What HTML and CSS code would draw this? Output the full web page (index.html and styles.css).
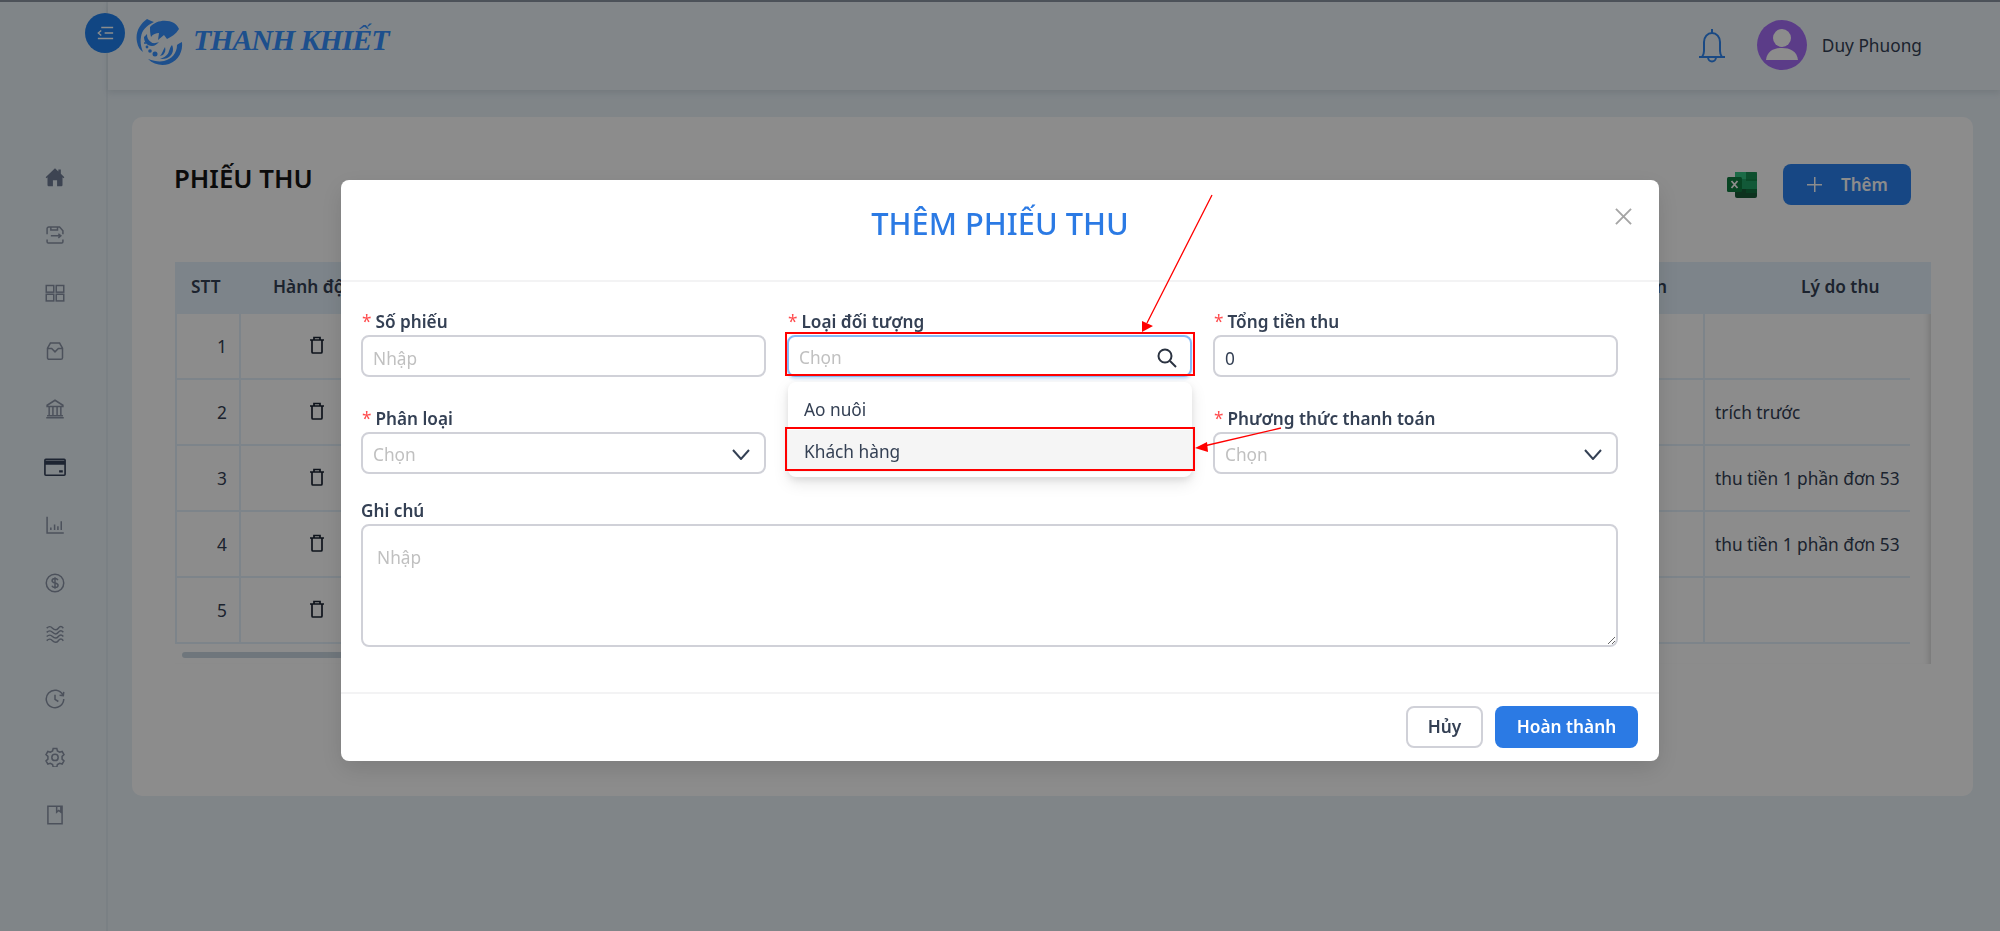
FILE: index.html
```html
<!DOCTYPE html>
<html lang="vi">
<head>
<meta charset="utf-8">
<title>Phiếu thu</title>
<link rel="stylesheet" href="styles.css">
</head>
<body>
<div class="app">
  <aside class="sidebar">
    <div class="nav-item"><svg class="nav-icon" viewBox="0 0 24 24"><path class="solid" d="M12 1.500 0.800 12.200l1 1.200L3 12.300V22a1 1 0 0 0 1 1h5.500v-7h5v7H20a1 1 0 0 0 1-1v-9.700l1.200 1.100 1-1.200L19 8.200V3h-3v2.300z"/></svg></div>
    <div class="nav-item"><svg class="nav-icon" viewBox="0 0 24 24"><path d="M2.500 11V4.500a2 2 0 0 1 2-2h13l4 4.500V11M7 2.800V6h8V2.800M7 13h12M16 10.500l3 2.500-3 2.500M2.500 17.500V20a1.500 1.500 0 0 0 1.500 1.500h16a1.500 1.500 0 0 0 1.500-1.500v-2.500"/></svg></div>
    <div class="nav-item"><svg class="nav-icon" viewBox="0 0 24 24"><rect x="1.500" y="3" width="9" height="8"/><rect x="13.500" y="3" width="9" height="8"/><rect x="1.500" y="13.500" width="9" height="8"/><rect x="13.500" y="13.500" width="9" height="8"/></svg></div>
    <div class="nav-item"><svg class="nav-icon" viewBox="0 0 24 24"><path d="M6.500 2.500h11l3.500 6V20a2 2 0 0 1-2 2H5a2 2 0 0 1-2-2V8.500zM3 9h5l4 4 4-4h5"/></svg></div>
    <div class="nav-item"><svg class="nav-icon" viewBox="0 0 24 24"><path d="M12 1.500 2.500 7.500V9h19V7.500zM5 9.500v10M9.500 9.500v10M14.500 9.500v10M19 9.500v10M2.500 20h19M1.500 22.500h21"/></svg></div>
    <div class="nav-item"><svg class="nav-icon nav-icon-strong" viewBox="0 0 24 24"><rect x="1" y="3.500" width="22" height="17.500" rx="1"/><path class="solid" d="M1 5h22v4.500H1zM16.500 15.500h4v2.500h-4z"/></svg></div>
    <div class="nav-item"><svg class="nav-icon" viewBox="0 0 24 24"><path d="M2.500 2v19.500h20M7 15v3M11.500 11.500V18M15.500 13.500V18M19.500 7.500V18"/></svg></div>
    <div class="nav-item"><svg class="nav-icon" viewBox="0 0 24 24"><circle cx="12" cy="12" r="10.500"/><path d="M15.500 8.500c-.8-1.500-2.200-2-3.500-2-2 0-3.500 1-3.500 2.700 0 3.800 7.200 1.800 7.200 5.600 0 1.800-1.700 2.700-3.700 2.700-1.500 0-3-.7-3.700-2.200M12 5v14"/></svg></div>
    <div class="nav-item nav-item-tight"><svg class="nav-icon" viewBox="0 0 24 24"><path d="M2 5c3-2.500 4.500-2.500 7 0s5 2.500 7 0 4-2.500 6 0M2 10c3-2.500 4.500-2.500 7 0s5 2.500 7 0 4-2.500 6 0M2 15c3-2.500 4.500-2.500 7 0s5 2.500 7 0 4-2.500 6 0M2 20c3-2.500 4.500-2.500 7 0s5 2.500 7 0 4-2.500 6 0"/></svg></div>
    <div class="nav-item"><svg class="nav-icon" viewBox="0 0 24 24"><path d="M21.500 7.500A10.500 10.500 0 1 0 22.500 12M17.500 7.500l4.500.5.500-4.500M12 7v5.500l4 2.500"/></svg></div>
    <div class="nav-item"><svg class="nav-icon" viewBox="0 0 24 24"><path d="M9.800 1.800h4.400l.7 3 2.700 1.500 3-.9 2.200 3.800-2.300 2.100v3.200l2.300 2.100-2.200 3.800-3-.9-2.700 1.500-.7 3H9.800l-.7-3-2.700-1.500-3 .9-2.200-3.800 2.300-2.100v-3.200L1.200 9.200l2.200-3.800 3 .9 2.700-1.500z"/><circle cx="12" cy="12.500" r="3.800"/></svg></div>
    <div class="nav-item"><svg class="nav-icon" viewBox="0 0 24 24"><path d="M3.500 1.500h17v21h-17zM14 1.500v7l2.500-2 2.500 2v-7"/></svg></div>
  </aside>

  <div class="content">
    <header class="topbar">
      <button class="toggle" type="button" aria-label="Thu gọn">
        <svg viewBox="0 0 20 16" class="toggle-icon"><path d="M5 1.500h14M9 8h10M1 14.500h18M5 5 1.500 8 5 11"/></svg>
      </button>
      <div class="brand">
        <svg class="brand-mark" viewBox="0 0 47 48">
          <path d="M14 9C20 2 31 1 38 5c3 2 4 4 5 6-3 5-8 8-12 10l-3-4-6 5 1-7c-3 0-6 1-8 4-1-4-1-7-1-10z"/>
          <path d="M11 1C4 6-1 14 1 24c1 5 3 8 6 10-2-5-3-10-2-15 1-7 5-11 13-15-3-1-5-2-7-3z"/>
          <path d="M8 19c0 5 3 9 8 9 3 0 5-2 7-4-3 1-6 2-8 0-3-2-4-4-4-8z"/>
          <path d="M46 24c1 9-3 18-13 22-7 2-15 1-21-5 6 2 11 3 16 2 8-2 13-8 13-16 1-1 3-2 5-3z"/>
          <path d="M36 27c2 4 1 9-3 12-3 2-6 2-9 2 5-2 8-4 9-8 1-2 1-4 3-6zM29 29c1 3 0 6-2 8l-3 1c2-2 3-6 5-9z"/>
          <circle cx="11" cy="29" r="1.400"/><circle cx="14" cy="33" r="1.800"/><circle cx="19" cy="36" r="2.500"/><circle cx="9" cy="25" r="1"/>
        </svg>
        <span class="brand-name">THANH KHIẾT</span>
      </div>
      <div class="user">
        <svg class="bell" viewBox="0 0 28 36"><path d="M1 30h26M4 30c1.500-2 2-3 2-6V15c0-5 3.500-9 8-9s8 4 8 9v9c0 3 .5 4 2 6M14 2v4M10 30c0 6 8 6 8 0"/></svg>
        <div class="avatar"><svg viewBox="0 0 50 50" class="avatar-icon"><circle cx="25" cy="18" r="9"/><path d="M9 40c1-9 8-12 16-12s15 3 16 12z"/></svg></div>
        <span class="user-name">Duy Phuong</span>
      </div>
    </header>

    <main class="main">
      <section class="card">
        <div class="card-head">
          <h1 class="card-title">PHIẾU THU</h1>
          <div class="card-actions">
            <svg class="excel" viewBox="0 0 30 28">
              <path class="xl-a" d="M8 1h20a2 2 0 0 1 2 2v5H8z"/><path class="xl-b" d="M8 8h22v10H8z"/><path class="xl-c" d="M8 18h22v7a2 2 0 0 1-2 2H10a2 2 0 0 1-2-2z"/><path class="xl-d" d="M19 1h11v9H19zM19 18h11v4H19z"/>
              <rect class="xl-e" x="0" y="6" width="15" height="15" rx="1.500"/><path class="xl-x" d="m4.500 10 6 7M10.500 10l-6 7"/>
            </svg>
            <button class="btn-add" type="button"><span class="plus"></span>Thêm</button>
          </div>
        </div>

        <div class="table">
          <div class="t-head">
            <span class="th th-stt">STT</span>
            <span class="th th-act">Hành động</span>
            <span class="th th-mid">Nhân viên</span>
            <span class="th th-reason">Lý do thu</span>
          </div>
          <div class="t-row">
            <span class="td td-stt">1</span>
            <span class="td td-act"><svg class="trash" viewBox="0 0 16 18"><path d="M1 4h14M3 4v12a1 1 0 0 0 1 1h8a1 1 0 0 0 1-1V4M5 4V1.500h6V4"/></svg></span>
            <span class="td td-mid"></span>
            <span class="td td-reason"></span>
          </div>
          <div class="t-row">
            <span class="td td-stt">2</span>
            <span class="td td-act"><svg class="trash" viewBox="0 0 16 18"><path d="M1 4h14M3 4v12a1 1 0 0 0 1 1h8a1 1 0 0 0 1-1V4M5 4V1.500h6V4"/></svg></span>
            <span class="td td-mid"></span>
            <span class="td td-reason">trích trước</span>
          </div>
          <div class="t-row">
            <span class="td td-stt">3</span>
            <span class="td td-act"><svg class="trash" viewBox="0 0 16 18"><path d="M1 4h14M3 4v12a1 1 0 0 0 1 1h8a1 1 0 0 0 1-1V4M5 4V1.500h6V4"/></svg></span>
            <span class="td td-mid"></span>
            <span class="td td-reason">thu tiền 1 phần đơn 53</span>
          </div>
          <div class="t-row">
            <span class="td td-stt">4</span>
            <span class="td td-act"><svg class="trash" viewBox="0 0 16 18"><path d="M1 4h14M3 4v12a1 1 0 0 0 1 1h8a1 1 0 0 0 1-1V4M5 4V1.500h6V4"/></svg></span>
            <span class="td td-mid"></span>
            <span class="td td-reason">thu tiền 1 phần đơn 53</span>
          </div>
          <div class="t-row">
            <span class="td td-stt">5</span>
            <span class="td td-act"><svg class="trash" viewBox="0 0 16 18"><path d="M1 4h14M3 4v12a1 1 0 0 0 1 1h8a1 1 0 0 0 1-1V4M5 4V1.500h6V4"/></svg></span>
            <span class="td td-mid"></span>
            <span class="td td-reason"></span>
          </div>
          <div class="scroll-thumb"></div>
        </div>
      </section>
    </main>
  </div>
</div>

<div class="overlay">
  <div class="modal">
    <div class="modal-head">
      <h2 class="modal-title">THÊM PHIẾU THU</h2>
      <svg class="modal-close" viewBox="0 0 18 18"><path d="M1 1l16 16M17 1 1 17"/></svg>
    </div>
    <div class="modal-body">
      <div class="form">
        <div class="field">
          <label class="label"><span class="req">*</span>Số phiếu</label>
          <input class="input" type="text" placeholder="Nhập">
        </div>
        <div class="field">
          <label class="label"><span class="req">*</span>Loại đối tượng</label>
          <div class="select select-open"><span class="ph">Chọn</span>
            <svg class="search" viewBox="0 0 20 20"><circle cx="8" cy="8" r="6.500"/><path d="m13 13 6 6"/></svg>
          </div>
          <div class="dropdown">
            <div class="option">Ao nuôi</div>
            <div class="option option-active">Khách hàng</div>
          </div>
        </div>
        <div class="field">
          <label class="label"><span class="req">*</span>Tổng tiền thu</label>
          <input class="input" type="text" value="0">
        </div>
        <div class="field">
          <label class="label"><span class="req">*</span>Phân loại</label>
          <div class="select"><span class="ph">Chọn</span>
            <svg class="chevron" viewBox="0 0 18 11"><path d="m1 1 8 9 8-9"/></svg>
          </div>
        </div>
        <div class="field"></div>
        <div class="field">
          <label class="label"><span class="req">*</span>Phương thức thanh toán</label>
          <div class="select"><span class="ph">Chọn</span>
            <svg class="chevron" viewBox="0 0 18 11"><path d="m1 1 8 9 8-9"/></svg>
          </div>
        </div>
        <div class="field field-wide">
          <label class="label">Ghi chú</label>
          <textarea class="textarea" placeholder="Nhập"></textarea>
        </div>
      </div>
    </div>
    <div class="modal-foot">
      <button class="btn btn-cancel" type="button">Hủy</button>
      <button class="btn btn-ok" type="button">Hoàn thành</button>
    </div>
  </div>

  <svg class="annot" viewBox="0 0 2000 931">
    <rect class="annot-box" x="786" y="333" width="408" height="42"/>
    <rect class="annot-box" x="786" y="428" width="408" height="42"/>
    <path class="annot-line" d="M1212 195 1147 323M1281 428 1204 446"/>
    <path class="annot-head" d="M1142 332V321L1153 326zM1195 448 1207 442 1208 452z"/>
  </svg>
</div>
</body>
</html>
```

FILE: styles.css
```css
* { box-sizing: border-box; }
html, body { margin: 0; height: 931px; overflow: hidden; }
body {
  font-family: "Noto Sans", "Open Sans", sans-serif;
  color: #344054;
  background: #e9f2f8;
  font-size: 17.300px;
}
.app {
  display: flex;
  height: 931px;
  border-top: 2px solid #8d96a3;
}

/* sidebar */
.sidebar {
  width: 108px;
  flex: none;
  padding: 145.500px 0 0 3px;
  border-right: 2px solid #dfe9f0;
  display: flex;
  flex-direction: column;
  align-items: center;
  background: #e9f2f8;
}
.nav-item { height: 58px; flex: none; display: flex; align-items: center; justify-content: center; }
.nav-item-tight { margin-top: -7px; margin-bottom: 7px; }
.nav-icon { width: 20px; height: 20px; fill: none; stroke: #8a94a6; stroke-width: 1.800; }
.nav-icon .solid { fill: #6f7d95; stroke: none; }
.nav-icon-strong { width: 22px; height: 22px; stroke: #36435a; }
.nav-icon-strong .solid { fill: #36435a; }

/* top bar */
.content { flex: 1; min-width: 0; display: flex; flex-direction: column; }
.topbar {
  height: 88px;
  flex: none;
  position: relative;
  display: flex;
  align-items: center;
  padding: 0 78px 2px 28px;
  background: #edf5fa;
  box-shadow: 0 3px 6px rgba(80, 100, 120, .14);
}
.toggle {
  position: absolute;
  left: -23px;
  top: 11px;
  width: 40px;
  height: 40px;
  padding: 0;
  border: 0;
  border-radius: 50%;
  background: #1f80ee;
  display: flex;
  align-items: center;
  justify-content: center;
}
.toggle-icon { width: 17px; height: 14px; fill: none; stroke: #fff; stroke-width: 1.600; }
.brand { display: flex; align-items: center; gap: 10px; margin-top: -6px; }
.brand-mark { width: 47px; height: 48px; fill: #3590ff; }
.brand-name {
  font-family: "Liberation Serif", serif;
  font-style: italic;
  font-weight: 700;
  font-size: 30px;
  color: #3590ff;
  letter-spacing: -1.100px;
  margin-top: -4px;
}
.user { margin-left: auto; display: flex; align-items: center; }
.bell { width: 28px; height: 36px; fill: none; stroke: #2f86f0; stroke-width: 2; margin-right: 31px; }
.avatar { width: 50px; height: 50px; border-radius: 50%; background: #a66ef8; }
.avatar-icon { display: block; width: 50px; height: 50px; fill: #fff; }
.user-name { margin-left: 15px; color: #344054; }

/* page */
.main { flex: 1; padding: 27px 27px 0 24px; }
.card {
  height: 679px;
  padding: 47px 42px 0 43px;
  border-radius: 10px;
  background: #fff;
}
.card-head { height: 98px; display: flex; justify-content: space-between; align-items: flex-start; padding-right: 20px; }
.card-title { margin: 0 0 0 -1px; font-size: 25.800px; line-height: 28px; font-weight: 600; color: #141414; }
.card-actions { display: flex; align-items: center; gap: 26px; }
.excel { width: 30px; height: 28px; }
.xl-a { fill: #33c481; }
.xl-b { fill: #21a366; }
.xl-c { fill: #185c37; }
.xl-d { fill: rgba(16, 124, 65, .7); }
.xl-e { fill: #107c41; }
.xl-x { fill: none; stroke: #fff; stroke-width: 1.800; }
.btn-add {
  width: 128px;
  height: 41px;
  border: 0;
  border-radius: 8px;
  background: #2a82f0;
  color: #fff;
  font: 600 17px "Noto Sans", sans-serif;
  display: flex;
  align-items: center;
  padding-left: 24px;
  gap: 19px;
}
.plus {
  width: 15px;
  height: 15px;
  background:
    linear-gradient(#fff, #fff) center / 15px 1.500px no-repeat,
    linear-gradient(#fff, #fff) center / 1.500px 15px no-repeat;
}

/* table */
.table {
  height: 402px;
  padding-right: 21px;
  box-shadow: inset -7px 0 6px -5px rgba(0, 0, 0, .16);
}
.t-head {
  height: 52px;
  margin-right: -21px;
  padding-bottom: 4px;
  display: flex;
  align-items: center;
  background: #e4f1fb;
  font-weight: 600;
  color: #344054;
}
.th { display: block; white-space: nowrap; }
.th-stt { width: 65px; padding-left: 16px; }
.th-act { width: 200px; padding-left: 33px; }
.th-mid { flex: 1; text-align: right; padding-right: 36px; }
.th-reason { width: 228px; padding-left: 98px; }
.t-row {
  height: 66px;
  display: flex;
  border-bottom: 2px solid #e4f1fb;
  color: #344054;
}
.td { display: flex; align-items: center; }
.td-stt {
  width: 66px;
  justify-content: flex-end;
  padding-right: 12px;
  border-left: 2px solid #e4f1fb;
  border-right: 2px solid #e4f1fb;
}
.td-act { width: 199px; padding-left: 68px; padding-bottom: 3px; }
.td-mid { flex: 1; }
.td-reason { width: 207px; padding-left: 10px; border-left: 2px solid #e4f1fb; white-space: nowrap; }
.trash { width: 16px; height: 18px; fill: none; stroke: #1b2433; stroke-width: 1.700; }
.scroll-thumb { width: 900px; height: 6px; margin: 8px 0 0 7px; border-radius: 3px; background: #cbd8e2; }

/* modal layer */
.overlay {
  position: fixed;
  inset: 0;
  background: rgba(0, 0, 0, .45);
  padding-top: 180px;
}
.modal {
  width: 1318px;
  height: 581px;
  margin: 0 auto;
  background: #fff;
  border-radius: 8px;
  display: flex;
  flex-direction: column;
  box-shadow: 0 8px 24px rgba(0, 0, 0, .12);
}
.modal-head {
  height: 102px;
  flex: none;
  position: relative;
  border-bottom: 2px solid #f3f3f4;
  display: flex;
  justify-content: center;
  padding-top: 21px;
}
.modal-title { margin: 0; font-size: 30.800px; line-height: 44px; font-weight: 500; color: #2b7ae4; }
.modal-close {
  position: absolute;
  right: 27px;
  top: 28px;
  width: 17px;
  height: 17px;
  fill: none;
  stroke: #a5a5a5;
  stroke-width: 2;
}
.modal-body { flex: 1; padding: 27px 41px 0 20px; }
.form { display: grid; grid-template-columns: repeat(3, 1fr); column-gap: 21px; row-gap: 29px; }
.field { position: relative; min-width: 0; }
.field-wide { grid-column: 1 / -1; margin-top: -5px; }
.label { display: block; height: 24px; margin-bottom: 2px; line-height: 26px; font-size: 17.200px; font-weight: 600; color: #344054; white-space: nowrap; }
.req { color: #ff4d4f; font-weight: 400; margin-right: 4px; margin-left: 1px; }
.input, .select, .textarea {
  display: block;
  width: 100%;
  border: 2px solid #d0d1d8;
  border-radius: 8px;
  background: #fff;
  font: 400 17.300px "Noto Sans", sans-serif;
  color: #344054;
  outline: none;
}
.input { height: 42px; padding: 4px 10px 0; }
.input::placeholder, .textarea::placeholder, .ph { color: #c0c0c0; }
.select {
  height: 42px;
  padding: 3px 10px 0;
  display: flex;
  align-items: center;
  justify-content: space-between;
}
.select-open { border-color: #85baf5; box-shadow: 0 2px 3px rgba(43, 122, 228, .25); }
.chevron { width: 18px; height: 11px; fill: none; stroke: #344054; stroke-width: 2; margin-right: 4px; }
.search { width: 20px; height: 20px; fill: none; stroke: #2a3240; stroke-width: 2; margin-right: 3px; }
.textarea { height: 123px; padding: 20px 14px; resize: vertical; }
.dropdown {
  position: absolute;
  left: 1px;
  right: 0;
  top: 73px;
  z-index: 2;
  padding: 6px 0 5px;
  background: #fff;
  border-radius: 8px;
  box-shadow: 0 6px 16px rgba(0, 0, 0, .1), 0 3px 6px rgba(0, 0, 0, .08);
}
.option { height: 42px; line-height: 44px; padding-left: 16px; color: #344054; }
.option-active { background: #f5f5f5; }
.modal-foot {
  height: 69px;
  flex: none;
  border-top: 2px solid #f3f3f4;
  display: flex;
  justify-content: flex-end;
  align-items: center;
  gap: 12px;
  padding: 0 21px 2px 0;
}
.btn {
  height: 42px;
  border-radius: 8px;
  font: 600 17.300px "Noto Sans", sans-serif;
}
.btn-cancel { width: 77px; background: #fff; border: 2px solid #d0d1d8; color: #344054; }
.btn-ok { width: 143px; background: #2b7ae4; border: 0; color: #fff; }

/* annotations */
.annot { position: absolute; inset: 0; z-index: 3; width: 2000px; height: 931px; pointer-events: none; }
.annot-box { fill: none; stroke: #f00; stroke-width: 2; }
.annot-line { fill: none; stroke: #f00; stroke-width: 1.300; }
.annot-head { fill: #f00; }
```
